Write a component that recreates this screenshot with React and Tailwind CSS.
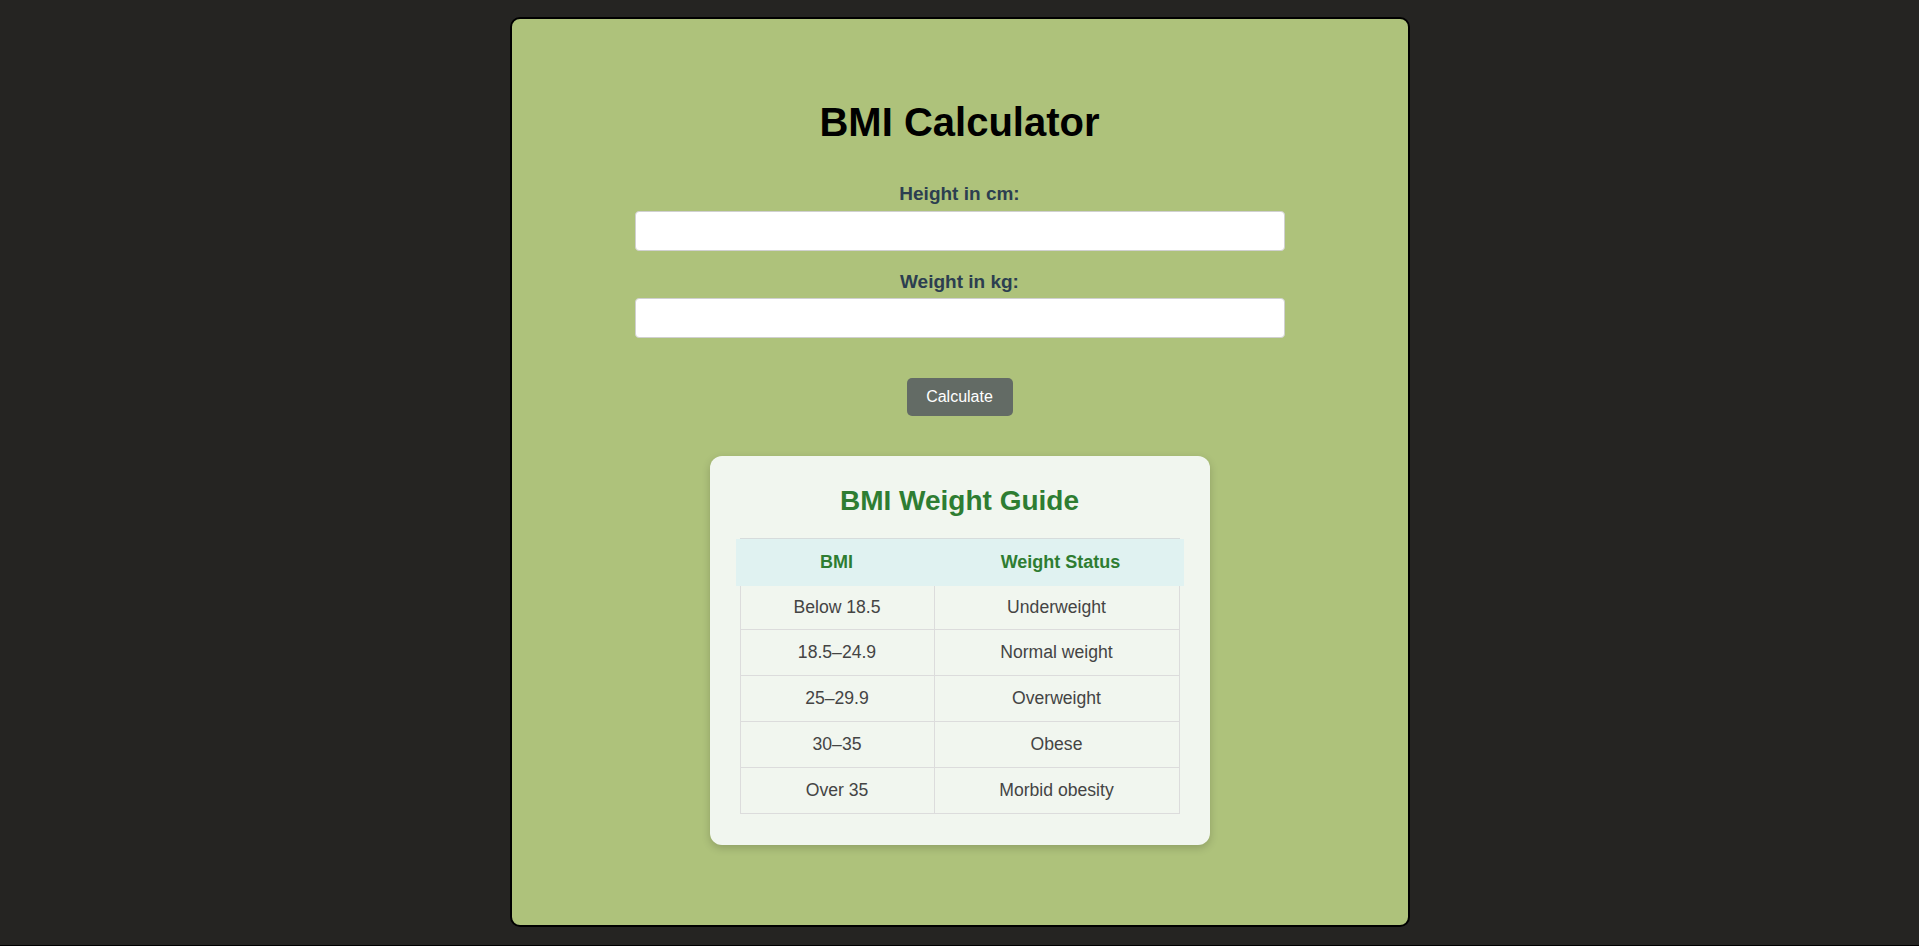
import React from "react";

const rows = [
  ["Below 18.5", "Underweight"],
  ["18.5–24.9", "Normal weight"],
  ["25–29.9", "Overweight"],
  ["30–35", "Obese"],
  ["Over 35", "Morbid obesity"],
];

export default function App() {
  return (
    <div
      className="h-[946px] bg-[#252422] border-b border-black pt-[17px] overflow-hidden"
      style={{ fontFamily: '"Liberation Sans", Arial, sans-serif' }}
    >
      <div className="mx-auto w-[900px] h-[910px] bg-[#aec27b] border-2 border-black rounded-[10px] flex flex-col items-center">
        <h1 className="mt-[80px] text-[40px] leading-[46px] font-bold text-black">BMI Calculator</h1>

        <label className="mt-[38px] text-[19px] leading-[22px] font-bold text-[#2c3e50]">Height in cm:</label>
        <input
          type="text"
          className="mt-[6px] w-[650px] h-[40px] bg-white border border-[#d0d0d0] rounded-[4px] outline-none"
        />

        <label className="mt-[20px] text-[19px] leading-[22px] font-bold text-[#2c3e50]">Weight in kg:</label>
        <input
          type="text"
          className="mt-[5px] w-[650px] h-[40px] bg-white border border-[#d0d0d0] rounded-[4px] outline-none"
        />

        <button className="mt-[40px] w-[106px] h-[38px] bg-[#636b65] text-white text-[16px] rounded-[5px]">
          Calculate
        </button>

        <div className="mt-[40px] w-[500px] h-[389px] bg-[#f1f6ef] rounded-[12px] shadow-[0_3px_8px_rgba(0,0,0,0.18)] pt-[28px] flex flex-col items-center">
          <h2 className="text-[28px] leading-[34px] font-bold text-[#2e7d32]">BMI Weight Guide</h2>

          <div className="mt-[20px] w-[448px] flex flex-col">
            <div className="ml-[4px] w-[440px] h-px bg-[#d6dcdc]" />
            <div className="flex h-[47px] bg-[#e0f2f1] text-[#2e7d32] font-bold text-[18px]">
              <div className="w-[202px] flex items-center justify-center">BMI</div>
              <div className="flex-1 flex items-center justify-center">Weight Status</div>
            </div>
            <div className="ml-[4px] w-[440px] border-x border-[#dcdcdc] flex flex-col text-[17.6px] text-[#444]">
              {rows.map((r, i) => (
                <div
                  key={i}
                  className={`flex border-b border-[#dcdcdc] ${i === 0 ? "h-[44px]" : "h-[46px]"}`}
                >
                  <div className="w-[194px] border-r border-[#dcdcdc] flex items-center justify-center">{r[0]}</div>
                  <div className="flex-1 flex items-center justify-center">{r[1]}</div>
                </div>
              ))}
            </div>
          </div>
        </div>
      </div>
    </div>
  );
}
